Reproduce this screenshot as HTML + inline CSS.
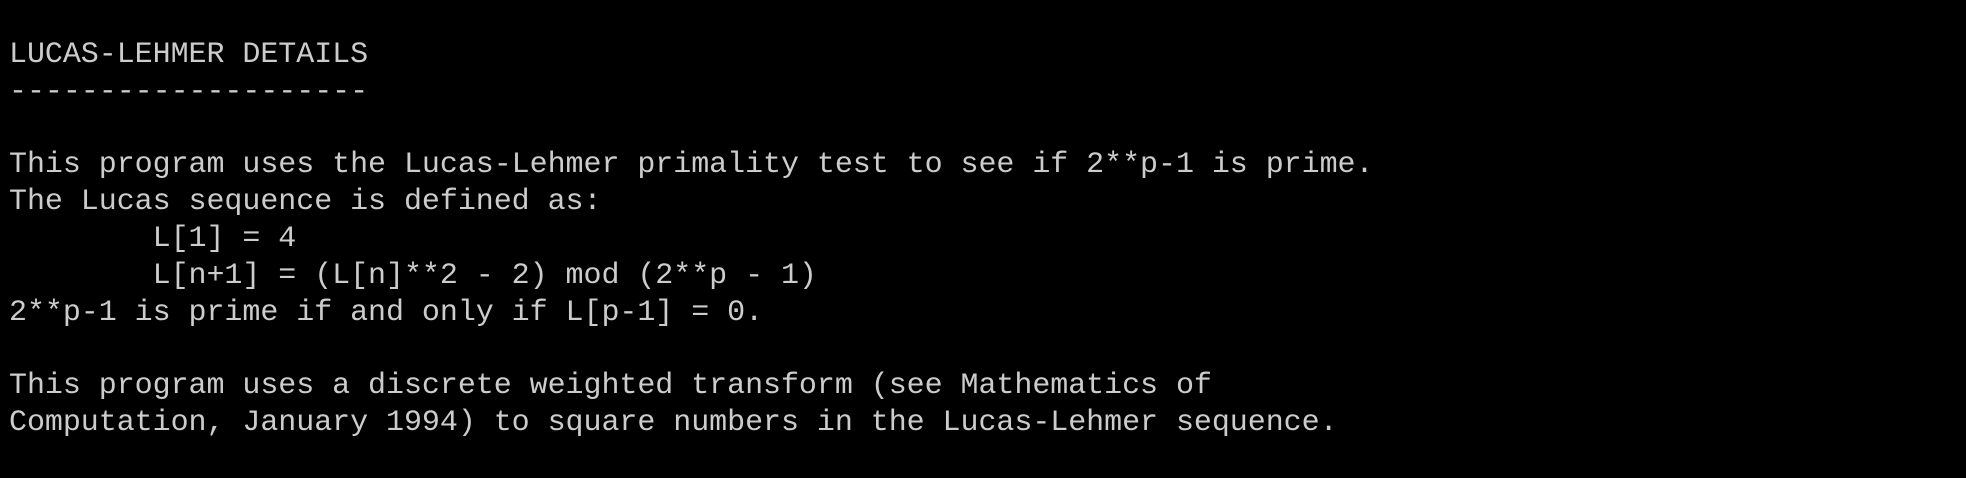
<!DOCTYPE html>
<html><head><style>
html,body{margin:0;padding:0;background:#000000;width:1966px;height:478px;overflow:hidden}
pre{margin:0;position:absolute;left:9px;top:37px;font-family:"Liberation Mono",monospace;font-size:30px;line-height:36.8px;color:#cccccc;letter-spacing:-0.05px}
</style></head><body><pre>LUCAS-LEHMER DETAILS
--------------------

This program uses the Lucas-Lehmer primality test to see if 2**p-1 is prime.
The Lucas sequence is defined as:
        L[1] = 4
        L[n+1] = (L[n]**2 - 2) mod (2**p - 1)
2**p-1 is prime if and only if L[p-1] = 0.

This program uses a discrete weighted transform (see Mathematics of
Computation, January 1994) to square numbers in the Lucas-Lehmer sequence.</pre></body></html>
